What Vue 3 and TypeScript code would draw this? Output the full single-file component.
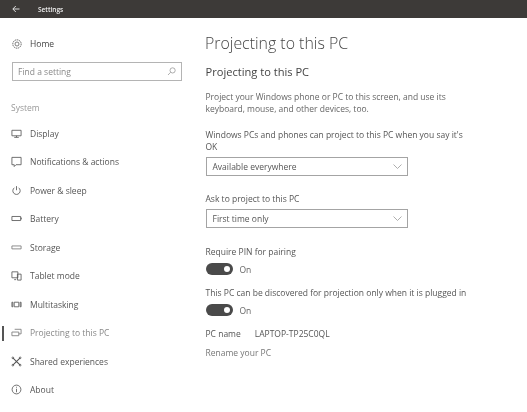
<script setup lang="ts">
const navItems = [
  { label: 'Display', icon: 'display' },
  { label: 'Notifications & actions', icon: 'notif' },
  { label: 'Power & sleep', icon: 'power' },
  { label: 'Battery', icon: 'battery' },
  { label: 'Storage', icon: 'storage' },
  { label: 'Tablet mode', icon: 'tablet' },
  { label: 'Multitasking', icon: 'multi' },
  { label: 'Projecting to this PC', icon: 'project', active: true },
  { label: 'Shared experiences', icon: 'shared' },
  { label: 'About', icon: 'about' },
]
</script>

<template>
  <div class="window">
    <header class="titlebar">
      <svg class="back" width="8" height="8" viewBox="0 0 8 8">
        <path d="M7.5 4H1M3.8 1 .8 4l3 3" fill="none" stroke="#eee" stroke-width=".9" />
      </svg>
      <span class="apptitle">Settings</span>
    </header>
    <div class="body">
      <aside class="sidebar">
        <div class="home">
          <svg class="icon" width="10" height="10" viewBox="0 0 11 11" fill="none" stroke="#666">
            <circle cx="5.5" cy="5.5" r="4.6" stroke-dasharray="1.6 .7" stroke-width="1.1" />
            <circle cx="5.5" cy="5.5" r="2.2" stroke-width=".9" />
          </svg>
          <span>Home</span>
        </div>
        <div class="search">
          <span>Find a setting</span>
          <svg width="9" height="9" viewBox="0 0 9 9" fill="none" stroke="#999" stroke-width=".8">
            <circle cx="5.6" cy="3.4" r="2.6" />
            <path d="M3.6 5.3 1 8" />
          </svg>
        </div>
        <div class="group">System</div>
        <nav class="nav">
          <div v-for="item in navItems" :key="item.label" class="nav-item" :class="{ active: item.active }">
            <svg class="icon" width="11" height="11" viewBox="0 0 12 12" fill="none" stroke="#555" stroke-width=".9">
              <template v-if="item.icon === 'display'">
                <path d="M1 2.500h10v6H1zM6 8.500V10M3.500 10.200h5" />
              </template>
              <template v-else-if="item.icon === 'notif'">
                <path d="M1 1.500h10v8H5.500L3.500 11.500v-2H1z" />
              </template>
              <template v-else-if="item.icon === 'power'">
                <path d="M3.700 3a4 4 0 1 0 4.600 0M6 1.200v4.500" />
              </template>
              <template v-else-if="item.icon === 'battery'">
                <path d="M1 3.800h9.500v4.400H1zM11.300 5v2" />
              </template>
              <template v-else-if="item.icon === 'storage'">
                <path d="M1 4.300h10v3.200H1z" stroke="#777" />
              </template>
              <template v-else-if="item.icon === 'tablet'">
                <path d="M1 2h6.500v6.500H1zM7 4.500h4V11H7zM3.500 10.500h2" />
              </template>
              <template v-else-if="item.icon === 'multi'">
                <path d="M3.500 3.500h5v5h-5zM1 3.500h1v5H1zM10 3.500h1v5h-1z" />
              </template>
              <template v-else-if="item.icon === 'project'">
                <path d="M4 2.500h7v5H8.500M1 5.500h7.500v4H1z" stroke="#777" />
              </template>
              <template v-else-if="item.icon === 'shared'">
                <path d="M2 2l8 8M10 2l-8 8" stroke-width="1.200" />
                <circle cx="2" cy="2" r=".9" />
                <circle cx="10" cy="2" r=".9" />
                <circle cx="2" cy="10" r=".9" />
                <circle cx="10" cy="10" r=".9" />
              </template>
              <template v-else>
                <circle cx="6" cy="6" r="4.800" />
                <path d="M6 5.200V9M6 3v1" />
              </template>
            </svg>
            <span>{{ item.label }}</span>
          </div>
        </nav>
      </aside>
      <main class="content">
        <h1>Projecting to this PC</h1>
        <h2>Projecting to this PC</h2>
        <p class="intro">Project your Windows phone or PC to this screen, and use its keyboard, mouse, and other devices, too.</p>
        <p class="label-first">Windows PCs and phones can project to this PC when you say it's OK</p>
        <div class="select">
          <span>Available everywhere</span>
          <svg width="9" height="5" viewBox="0 0 9 5"><path d="M.5.5l4 4 4-4" fill="none" stroke="#999" stroke-width=".8" /></svg>
        </div>
        <p class="label-ask">Ask to project to this PC</p>
        <div class="select">
          <span>First time only</span>
          <svg width="9" height="5" viewBox="0 0 9 5"><path d="M.5.5l4 4 4-4" fill="none" stroke="#999" stroke-width=".8" /></svg>
        </div>
        <p class="label-pin">Require PIN for pairing</p>
        <div class="toggle-row">
          <span class="toggle"><i></i></span>
          <span>On</span>
        </div>
        <p class="label-plug">This PC can be discovered for projection only when it is plugged in</p>
        <div class="toggle-row">
          <span class="toggle"><i></i></span>
          <span>On</span>
        </div>
        <div class="pc-name">
          <span>PC name</span>
          <span>LAPTOP-TP25C0QL</span>
        </div>
        <div class="rename">Rename your PC</div>
      </main>
    </div>
  </div>
</template>

<style>
html, body {
  margin: 0;
  background: #fff;
}
</style>

<style scoped>
.window {
  width: 527px;
  height: 412px;
  overflow: hidden;
  font-family: "Open Sans", sans-serif;
  font-size: 8.5px;
  color: #555;
  background: #fff;
  display: flex;
  flex-direction: column;
  filter: blur(0.45px);
}
.titlebar {
  height: 18px;
  background: #3d3a38;
  display: flex;
  align-items: center;
  flex-shrink: 0;
  color: #eee;
}
.back {
  margin-left: 12px;
}
.apptitle {
  margin-left: 18px;
  font-size: 6.5px;
  font-weight: 600;
}
.body {
  display: flex;
  flex: 1;
}
.sidebar {
  width: 205.5px;
  flex-shrink: 0;
}
.home {
  display: flex;
  align-items: center;
  margin-top: 19px;
  height: 13px;
  padding-left: 12px;
  gap: 8px;
  color: #444;
}
.search {
  margin: 12px 0 0 12px;
  width: 170px;
  height: 19px;
  box-sizing: border-box;
  border: 1px solid #b4b4b4;
  display: flex;
  align-items: center;
  justify-content: space-between;
  padding: 0 5px;
  color: #888;
}
.group {
  margin: 19px 0 0 11px;
  height: 16px;
  line-height: 16px;
  color: #999;
}
.nav {
  margin-top: 3px;
}
.nav-item {
  height: 28.5px;
  display: flex;
  align-items: center;
  padding-left: 11px;
  gap: 8px;
  position: relative;
}
.nav-item.active {
  color: #888;
}
.nav-item.active::before {
  content: "";
  position: absolute;
  left: 2px;
  top: 7px;
  width: 2px;
  height: 15px;
  background: #555;
}
.content {
  flex: 1;
}
h1 {
  margin: 15px 0 0;
  margin-left: -0.5px;
  font-size: 15.9px;
  font-weight: 300;
  line-height: 20px;
  color: #444;
}
h2 {
  margin: 11px 0 0;
  font-size: 11.1px;
  font-weight: 400;
  line-height: 15px;
  color: #444;
}
p {
  margin: 0;
  line-height: 12px;
  width: 265px;
}
.intro {
  margin-top: 12px;
  color: #666;
}
.label-first {
  margin-top: 14px;
}
.label-ask {
  margin-top: 17px;
}
.label-pin {
  margin-top: 18px;
}
.label-plug {
  margin-top: 12px;
  white-space: nowrap;
}
.select {
  margin-top: 4px;
  width: 202px;
  height: 19px;
  box-sizing: border-box;
  border: 1px solid #a4a4a4;
  display: flex;
  align-items: center;
  justify-content: space-between;
  padding: 0 5px 0 6px;
}
.toggle-row {
  margin-top: 5px;
  height: 12px;
  display: flex;
  align-items: center;
  gap: 7px;
  color: #666;
}
.toggle {
  width: 27px;
  height: 12px;
  border-radius: 6px;
  background: #4a4a4a;
  position: relative;
}
.toggle i {
  position: absolute;
  right: 3px;
  top: 3px;
  width: 6px;
  height: 6px;
  border-radius: 50%;
  background: #fff;
}
.pc-name {
  margin-top: 12px;
  line-height: 12px;
  display: flex;
  gap: 14px;
}
.rename {
  margin-top: 7px;
  line-height: 12px;
  color: #777;
}
</style>
